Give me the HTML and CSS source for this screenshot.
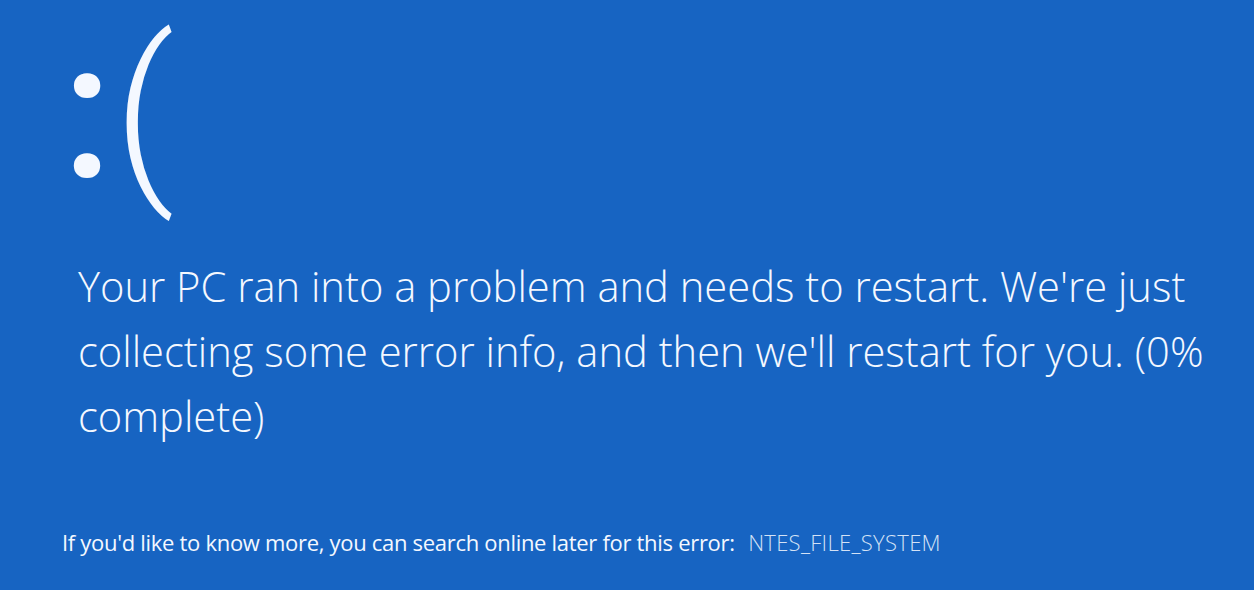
FILE: index.html
```html
<!DOCTYPE html>
<html lang="en">
<head>
<meta charset="UTF-8">
<meta name="viewport" content="width=device-width, initial-scale=1.0">
<title>Stop error</title>
<link rel="stylesheet" href="styles.css">
</head>
<body>

<div class="screen">
  <div class="face"><span class="eyes">:</span><span class="mouth">(</span></div>

  <p class="message">Your PC ran into a problem and needs to restart. We're just collecting some error info, and then we'll restart for you. (0% complete)</p>

  <p class="more">
    If you'd like to know more, you can search online later for this error:
    <span class="code">NTES_FILE_SYSTEM</span>
  </p>
</div>

</body>
</html>
```

FILE: styles.css
```css
body {
    margin: 0;
    padding: 0;
    background-color: #1764c2;
    color: #f4f8ff;
    font-family: "Open Sans", "Noto Sans", sans-serif;
  }

  .screen {
    height: 590px;
    padding: 0 30px 0 62px;
    box-sizing: border-box;
    display: flex;
    flex-direction: column;
    overflow: hidden;
  }

  .face {
    font-family: Roboto, "Open Sans", sans-serif;
    font-size: 191px;
    line-height: normal;
    height: 240px;
    white-space: nowrap;
  }

  .eyes {
    font-weight: 500;
    margin-right: 1px;
  }

  .mouth {
    font-weight: 300;
  }

  .message {
    font-size: 41.7px;
    font-weight: 300;
    line-height: 65px;
    margin: 13px 0 0 16px;
    max-width: 1150px;
  }

  .more {
    font-size: 22px;
    font-weight: 400;
    letter-spacing: -0.3px;
    margin: auto 0 33px 0;
  }

  .code {
    font-weight: 300;
    color: #d4e2f6;
    margin-left: 8px;
    letter-spacing: 0.3px;
  }
```
